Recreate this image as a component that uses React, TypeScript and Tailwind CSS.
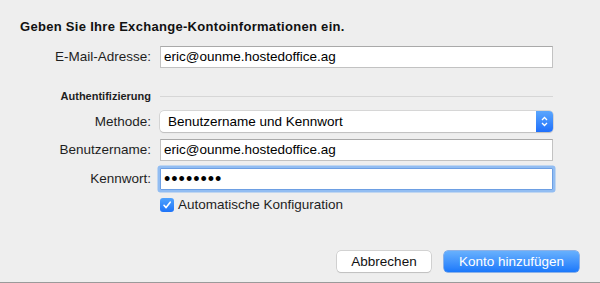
import * as React from 'react';

const font = { fontFamily: '"Liberation Sans", Arial, Helvetica, sans-serif' };

function Field({ children, focused = false }: { children: React.ReactNode; focused?: boolean }) {
  return (
    <div
      className={
        focused
          ? "h-[22px] bg-white border border-[#6d9fe3] rounded-[1px] shadow-[0_0_0_2.5px_#92bdf2] flex items-center pl-[3px]"
          : "h-[22px] bg-white border border-[#c2c2c2] border-t-[#a9a9a9] flex items-center pl-[3px]"
      }
    >
      {children}
    </div>
  );
}

function Label({ children, className = "" }: { children: React.ReactNode; className?: string }) {
  return (
    <div className={"text-right text-[13.5px] leading-[16px] text-[#1e1e1e] " + className}>
      {children}
    </div>
  );
}

export default function App() {
  return (
    <div className="w-[600px] h-[283px] bg-[#eeeeee] flex flex-col text-[13.5px] leading-[16px]" style={font}>
      <div className="pt-[19px] pl-[20px]">
        <h1 className="text-[13px] leading-[16px] tracking-[0.3px] font-bold text-[#111]">
          Geben Sie Ihre Exchange-Kontoinformationen ein.
        </h1>
      </div>

      <div className="pl-[20px] grid grid-cols-[131px_393px] gap-x-[9px] items-center">
        {/* E-Mail */}
        <Label className="mt-[11px]">E-Mail-Adresse:</Label>
        <div className="mt-[11px]">
          <Field>
            <span className="text-black">eric@ounme.hostedoffice.ag</span>
          </Field>
        </div>

        {/* Authentifizierung */}
        <div className="mt-[21px] h-[14px] text-right text-[11px] leading-[14px] font-bold text-[#1e1e1e]">
          Authentifizierung
        </div>
        <div className="mt-[21px] h-[14px] flex items-center">
          <div className="w-full h-px bg-[#d6d6d6]" />
        </div>

        {/* Methode */}
        <Label className="mt-[8px]">Methode:</Label>
        <div className="mt-[8px]">
          <div className="h-[21px] bg-white rounded-[4px] shadow-[0_0_0_0.5px_#bdbdbd,0_1px_1px_rgba(0,0,0,0.18)] flex items-center">
            <span className="flex-1 pl-[8px] text-black">Benutzername und Kennwort</span>
            <div className="w-[17px] h-[21px] rounded-r-[4px] bg-gradient-to-b from-[#5ba6fd] to-[#1f6ffb] flex items-center justify-center">
              <svg width="9" height="13" viewBox="0 0 9 13" fill="none">
                <path d="M2 5 L4.5 2.5 L7 5" stroke="white" strokeWidth="1.3" />
                <path d="M2 8 L4.5 10.5 L7 8" stroke="white" strokeWidth="1.3" />
              </svg>
            </div>
          </div>
        </div>

        {/* Benutzername */}
        <Label className="mt-[7px]">Benutzername:</Label>
        <div className="mt-[7px]">
          <Field>
            <span className="text-black">eric@ounme.hostedoffice.ag</span>
          </Field>
        </div>

        {/* Kennwort */}
        <Label className="mt-[7px]">Kennwort:</Label>
        <div className="mt-[7px]">
          <Field focused>
            <span className="text-[18px] leading-none tracking-[1px] text-black">••••••••</span>
          </Field>
        </div>

        {/* Checkbox */}
        <div className="mt-[8px] h-[14px]" />
        <div className="mt-[8px] flex items-center gap-[4px] h-[14px]">
          <div className="w-[14px] h-[14px] rounded-[3px] bg-gradient-to-b from-[#4fa2fd] to-[#1e73f8] flex items-center justify-center">
            <svg width="10" height="10" viewBox="0 0 10 10" fill="none">
              <path d="M2 5.3 L4.1 7.6 L8.2 2.2" stroke="white" strokeWidth="1.6" strokeLinecap="round" strokeLinejoin="round" />
            </svg>
          </div>
          <span className="text-[#1e1e1e]">Automatische Konfiguration</span>
        </div>
      </div>

      <div className="mt-auto mb-[10px] pr-[21px] flex justify-end gap-[13px]">
        <button className="w-[94px] h-[21px] bg-white rounded-[4px] shadow-[0_0_0_0.5px_#b5b5b5,0_1px_1px_rgba(0,0,0,0.15)] text-[13.5px] text-[#111]">
          Abbrechen
        </button>
        <button className="w-[135px] h-[21px] rounded-[4px] bg-gradient-to-b from-[#67b0fd] to-[#1a78fb] shadow-[0_0_0_0.5px_#2a74e0] text-[13.5px] text-white">
          Konto hinzufügen
        </button>
      </div>
      <div className="h-px bg-[#9a9a9a]" />
    </div>
  );
}
